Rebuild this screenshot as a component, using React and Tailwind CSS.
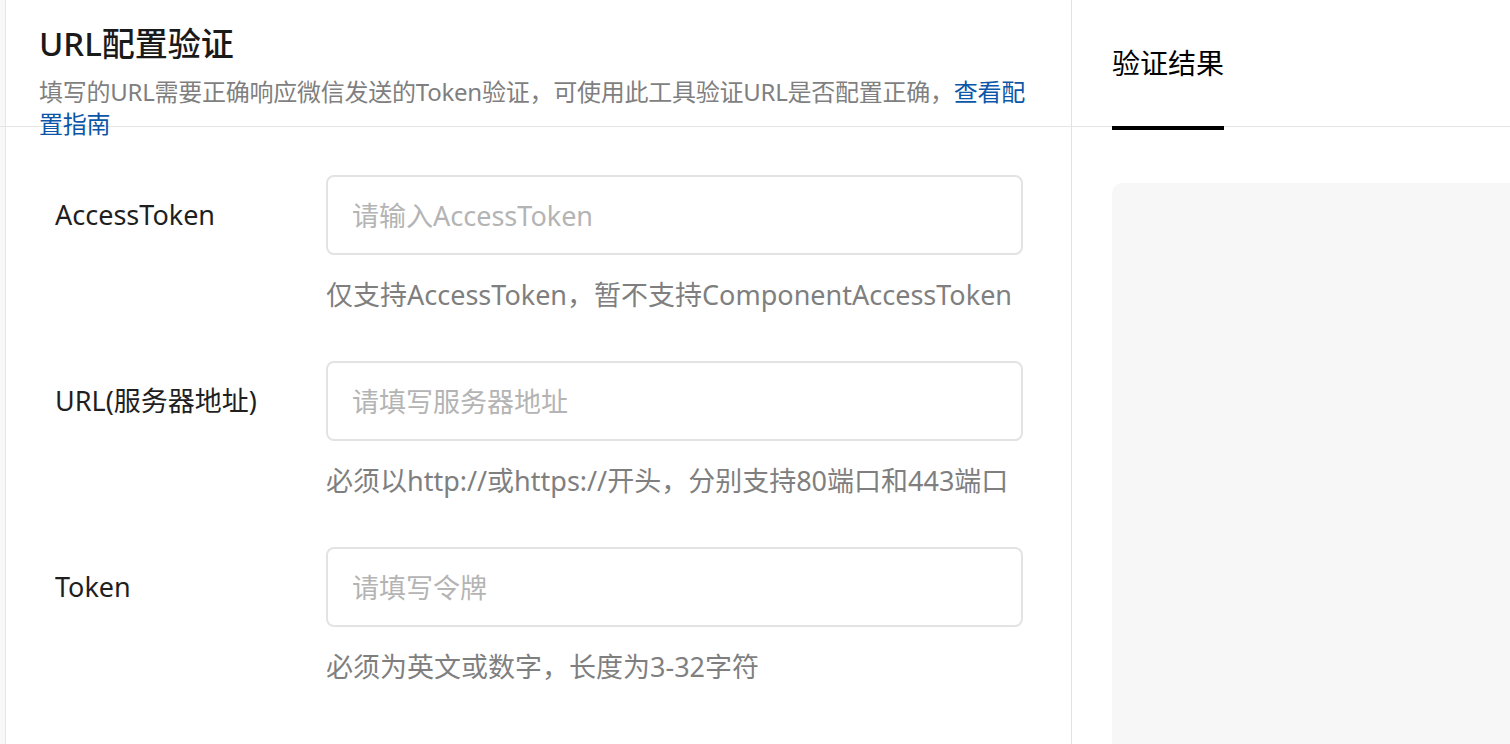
const fields = [
  {
    label: "AccessToken",
    placeholder: "请输入AccessToken",
    hint: "仅支持AccessToken，暂不支持ComponentAccessToken",
  },
  {
    label: "URL(服务器地址)",
    placeholder: "请填写服务器地址",
    hint: "必须以http://或https://开头，分别支持80端口和443端口",
  },
  {
    label: "Token",
    placeholder: "请填写令牌",
    hint: "必须为英文或数字，长度为3-32字符",
  },
];

function Field({ label, placeholder, hint }) {
  return (
    <div className="mb-[47px]">
      <div className="flex items-center">
        <label className="w-[271px] text-[27px] text-[#1f1f1f]">{label}</label>
        <input
          placeholder={placeholder}
          className="h-[80px] w-[697px] rounded-[8px] border-2 border-[#e3e3e3] bg-white px-[24px] text-[27px] text-[#1f1f1f] outline-none placeholder:text-[#b4b4b4]"
        />
      </div>
      <p className="ml-[271px] mt-[20px] text-[27px] leading-[39px] text-[#7f7f7f]">
        {hint}
      </p>
    </div>
  );
}

export default function App() {
  return (
    <div className="flex h-[744px] w-[1510px] flex-col overflow-hidden bg-white font-['Noto_Sans','Noto_Sans_CJK_SC',sans-serif]">
      <div className="flex h-[127px] shrink-0 border-b border-[#e5e5e5]">
        <div className="w-[6px] shrink-0 border-r border-[#e6e6e6] bg-[#f8f8f8]" />
        <div className="w-[1066px] shrink-0 border-r border-[#e2e2e2] pl-[33px] pt-[20px]">
          <h1 className="text-[33px] font-medium leading-[48px] text-[#1a1a1a]">
            URL配置验证
          </h1>
          <p className="mt-[8px] whitespace-nowrap text-[24px] leading-[32px] tracking-[-0.25px] text-[#7f7f7f]">
            填写的URL需要正确响应微信发送的Token验证，可使用此工具验证URL是否配置正确，
            <a href="#" className="text-[#0b56a8]">
              查看配
              <br />
              置指南
            </a>
          </p>
        </div>
        <div className="flex-1 pl-[40px]">
          <div className="relative z-10 flex h-[130px] w-fit items-center border-b-4 border-black text-[28px] text-black">
            验证结果
          </div>
        </div>
      </div>
      <div className="flex flex-1">
        <div className="w-[6px] shrink-0 border-r border-[#e6e6e6] bg-[#f8f8f8]" />
        <div className="w-[1066px] shrink-0 border-r border-[#e2e2e2] pl-[49px] pt-[48px]">
          {fields.map((f) => (
            <Field key={f.label} {...f} />
          ))}
        </div>
        <div className="flex flex-1 pl-[40px] pt-[56px]">
          <div className="flex-1 rounded-tl-[10px] bg-[#f7f7f7]" />
        </div>
      </div>
    </div>
  );
}
